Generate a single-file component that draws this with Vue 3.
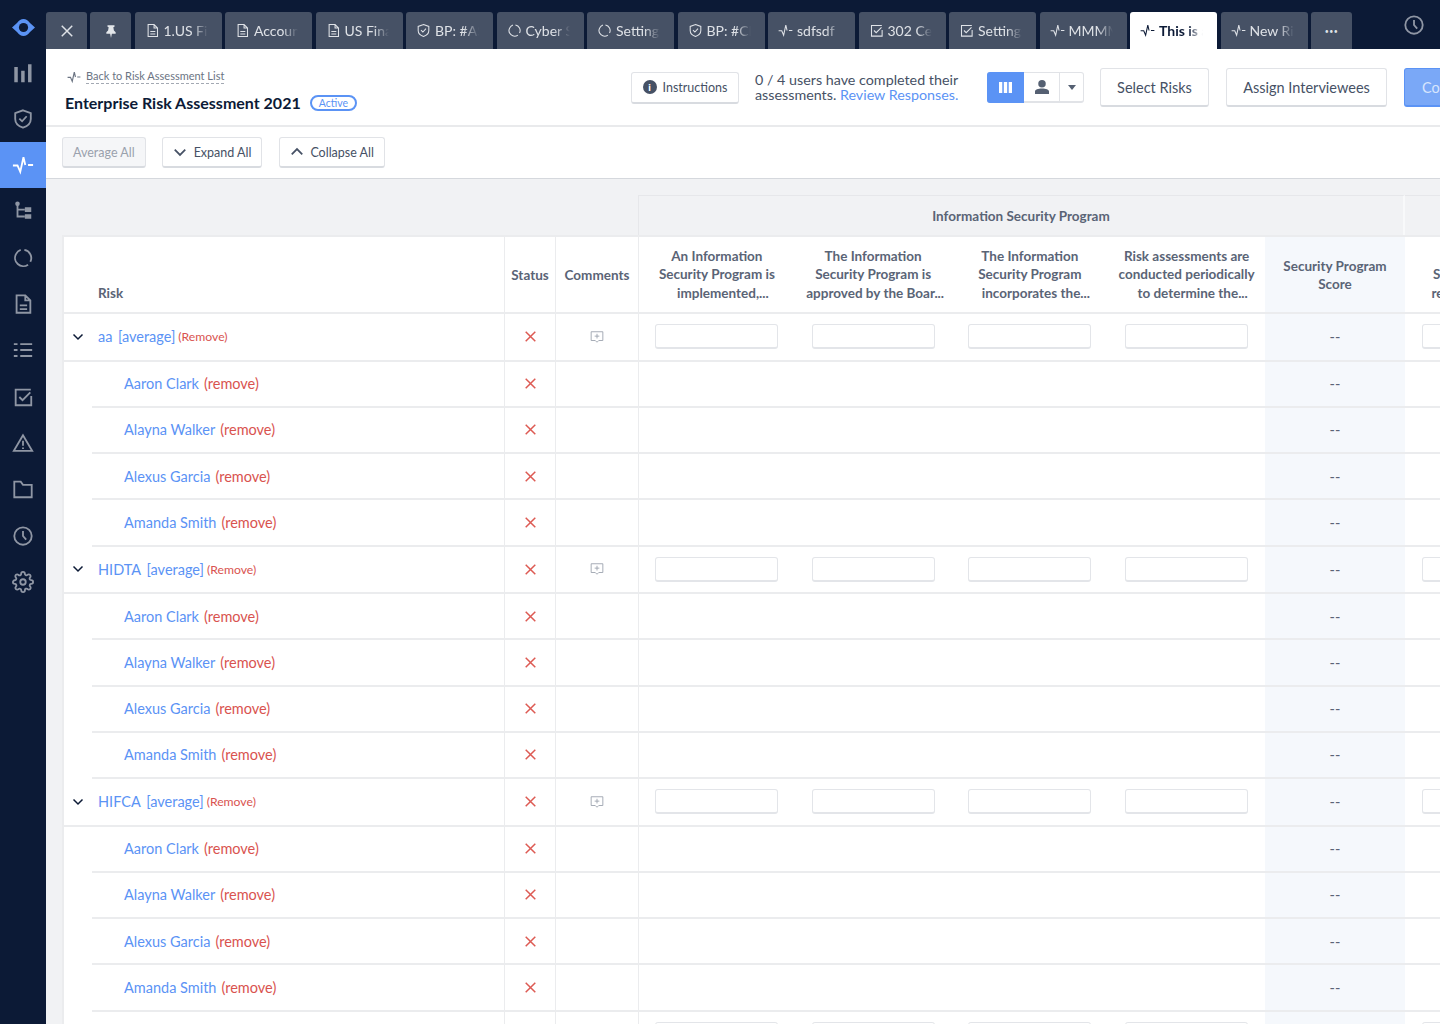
<template>
  <div class="app">
    <aside class="sidebar">
      <div class="logo">
        <svg width="23" height="17" viewBox="0 0 23 17">
          <path fill="#5b93f5" d="M0 8.500L5 4C7 1.500 9 0 11.500 0S16 1.500 18 4L23 8.500 18 13c-2 2.500-4 4-6.500 4S7 15.500 5 13z" />
          <circle cx="11.500" cy="8.500" r="4.600" fill="#0c1a36" />
        </svg>
      </div>
      <div v-for="item in sideItems" :key="item.name" class="side-item" :class="{ active: item.active }">
        <svg width="22" height="22" viewBox="0 0 24 24" class="icon">
          <path :d="icons[item.name]" />
          <path v-if="solid[item.name]" :d="solid[item.name]" class="solid" />
        </svg>
      </div>
    </aside>

    <div class="main">
      <div class="topbar">
        <div class="tab small first">
          <svg width="14" height="14" viewBox="0 0 24 24" class="icon close"><path d="M3 3l18 18M21 3L3 21" /></svg>
        </div>
        <div class="tab small">
          <svg width="14" height="14" viewBox="0 0 24 24"><path fill="#e3e6ea" d="M6 2h12v2.500l-2 1 1 5.500 3 3v2.500h-6.500L12 24l-1.500-7.500H4V14l3-3 1-5.500-2-1z" /></svg>
        </div>
        <div v-for="tab in tabs" :key="tab.label + tab.icon" class="tab" :class="{ current: tab.current }">
          <svg width="15" height="15" viewBox="0 0 24 24" class="icon">
            <path :d="icons[tab.icon]" />
          </svg>
          <span class="tab-label">{{ tab.label }}</span>
        </div>
        <div class="tab small dots">•••</div>
        <div class="history">
          <svg width="22" height="22" viewBox="0 0 24 24" class="icon"><path :d="icons.clock" /></svg>
        </div>
      </div>

      <header class="page-head">
        <div class="head-left">
          <div class="back">
            <svg width="14" height="14" viewBox="0 0 24 24" class="icon"><path :d="icons.pulse" /></svg>
            <span class="back-link">Back to Risk Assessment List</span>
          </div>
          <div class="title-row">
            <h1>Enterprise Risk Assessment 2021</h1>
            <span class="badge">Active</span>
          </div>
        </div>
        <button class="btn instructions">
          <span class="info">i</span>
          Instructions
        </button>
        <div class="progress">
          0 / 4 users have completed their<br />assessments. <a>Review Responses.</a>
        </div>
        <div class="toggle">
          <span class="toggle-on">
            <svg width="13" height="11" viewBox="0 0 13 11"><path fill="#fff" d="M0 0h3.300v11H0zM4.800 0h3.400v11H4.800zM9.700 0H13v11H9.700z" /></svg>
          </span>
          <span class="toggle-user">
            <svg width="14" height="14" viewBox="0 0 14 14"><path fill="#556072" d="M7 0a3.500 3.500 0 0 1 0 7.500A3.500 3.500 0 0 1 7 0zM0 14v-2.500C0 9.500 3 8.500 7 8.500s7 1 7 3V14z" /></svg>
          </span>
          <span class="toggle-caret"></span>
        </div>
        <button class="btn big select">Select Risks</button>
        <button class="btn big assign">Assign Interviewees</button>
        <button class="btn big complete">Complete</button>
      </header>

      <div class="toolbar">
        <button class="btn tool disabled">Average All</button>
        <button class="btn tool">
          <svg width="14" height="14" viewBox="0 0 24 24" class="icon bold"><path d="M3 8l9 9 9-9" /></svg>
          Expand All
        </button>
        <button class="btn tool">
          <svg width="14" height="14" viewBox="0 0 24 24" class="icon bold"><path d="M3 16l9-9 9 9" /></svg>
          Collapse All
        </button>
      </div>

      <div class="content">
        <div class="group-heads">
          <div class="group-head">Information Security Program</div>
          <div class="group-head next"></div>
        </div>
        <div class="table">
          <div class="row head">
            <div class="cell risk">Risk</div>
            <div class="cell status">Status</div>
            <div class="cell comments">Comments</div>
            <div v-for="q in questions" :key="q.last" class="cell q">
              <div>
                {{ q.first }}<br />{{ q.second }}<br />
                <span class="last-line" :style="{ marginLeft: q.shift + 'px' }">{{ q.last }}</span>
              </div>
            </div>
            <div class="cell score">Security Program<br />Score</div>
            <div class="cell q">A Cyber<br />Security Policy is<br />reviewed yearly...</div>
          </div>
          <template v-for="group in groups" :key="group">
            <div class="row group">
              <div class="cell risk">
                <svg width="12" height="12" viewBox="0 0 24 24" class="icon chevron"><path d="M3 7l9 9 9-9" /></svg>
                <a>{{ group }}</a>
                <a class="average">[average]</a>
                <span class="remove-small">(Remove)</span>
              </div>
              <div class="cell status">
                <svg width="11" height="11" viewBox="0 0 11 11" class="cross"><path d="M.7.7l9.600 9.600M10.300.7L.7 10.300" /></svg>
              </div>
              <div class="cell comments">
                <svg width="14" height="14" viewBox="0 0 24 24" class="icon comment"><path d="M2 3h20v15h-7l-3 3-3-3H2zM12 6.500v8M8 10.500h8" /></svg>
              </div>
              <div v-for="n in 4" :key="n" class="cell q"><span class="input"></span></div>
              <div class="cell score">--</div>
              <div class="cell q"><span class="input"></span></div>
            </div>
            <div v-for="person in people" :key="person" class="row">
              <div class="cell risk child">
                <a>{{ person }}</a>
                <span class="remove">(remove)</span>
              </div>
              <div class="cell status">
                <svg width="11" height="11" viewBox="0 0 11 11" class="cross"><path d="M.7.7l9.600 9.600M10.300.7L.7 10.300" /></svg>
              </div>
              <div class="cell comments"></div>
              <div class="cell answers"></div>
              <div class="cell score">--</div>
              <div class="cell q"></div>
            </div>
          </template>
        </div>
      </div>
    </div>
  </div>
</template>

<script setup>
const icons = {
  bars: '',
  shield: 'M12 2.500l8.500 3v6.500c0 5-4 8-8.500 9.500-4.500-1.500-8.500-4.500-8.500-9.500V5.500zM8 11.500l3 3 5-5.500',
  pulse: 'M1 12.500h5l3 7 3.500-16 2 8.500M17.500 12H23',
  tree: 'M6 4v14h8M6 10.500h8',
  ring: 'M13.500 3.100a9 9 0 0 1 6.500 13M17.500 19.300a9 9 0 0 1-13-11.800 9 9 0 0 1 5-4.300',
  doc: 'M5 2.500h9.500L20 8v13.500H5zM14.500 2.500V8H20M8.500 13.500h8M8.500 17.500h8',
  list: 'M9 5.500h13M9 12h13M9 18.500h13M2 5.500h4M2 12h4M2 18.500h4',
  check: 'M20.500 4H4v17h17V11M8 12l3.500 3.500L20 7',
  warn: 'M12 3.500L2 20.500h20zM12 9.500v5.500M12 17v1.500',
  folder: 'M2.500 4h7l2.500 3.500h9.500V21h-19z',
  clock: 'M12 2.500a9.500 9.500 0 1 1 0 19 9.500 9.500 0 0 1 0-19zM12 6.500V12l3.500 4',
  gear: 'M12 9a3 3 0 1 0 0 6 3 3 0 0 0 0-6zM19.400 15a1.650 1.650 0 0 0 .33 1.820l.06.06a2 2 0 0 1 0 2.830 2 2 0 0 1-2.830 0l-.06-.06a1.650 1.650 0 0 0-1.820-.33 1.650 1.650 0 0 0-1 1.510V21a2 2 0 0 1-2 2 2 2 0 0 1-2-2v-.09A1.650 1.650 0 0 0 9 19.400a1.650 1.650 0 0 0-1.820.33l-.06.06a2 2 0 0 1-2.830 0 2 2 0 0 1 0-2.830l.06-.06a1.650 1.650 0 0 0 .33-1.820 1.650 1.650 0 0 0-1.510-1H3a2 2 0 0 1-2-2 2 2 0 0 1 2-2h.09A1.650 1.650 0 0 0 4.600 9a1.650 1.650 0 0 0-.33-1.820l-.06-.06a2 2 0 0 1 0-2.830 2 2 0 0 1 2.830 0l.06.06a1.650 1.650 0 0 0 1.820.33H9a1.650 1.650 0 0 0 1-1.510V3a2 2 0 0 1 2-2 2 2 0 0 1 2 2v.09a1.650 1.650 0 0 0 1 1.510 1.650 1.650 0 0 0 1.820-.33l.06-.06a2 2 0 0 1 2.830 0 2 2 0 0 1 0 2.830l-.06.06a1.650 1.650 0 0 0-.33 1.820V9a1.650 1.650 0 0 0 1.510 1H21a2 2 0 0 1 2 2 2 2 0 0 1-2 2h-.09a1.650 1.650 0 0 0-1.510 1z',
}

const solid = {
  bars: 'M2.500 5.500h3.800V22H2.500zM10 9.500h3.800V22H10zM17.500 2.500h3.800V22h-3.800z',
  tree: 'M6 1.500a2.500 2.500 0 1 1 0 5 2.500 2.500 0 0 1 0-5zM14 8h7v5h-7zM14 15.500h7v5h-7z',
}

const sideItems = [
  { name: 'bars' },
  { name: 'shield' },
  { name: 'pulse', active: true },
  { name: 'tree' },
  { name: 'ring' },
  { name: 'doc' },
  { name: 'list' },
  { name: 'check' },
  { name: 'warn' },
  { name: 'folder' },
  { name: 'clock' },
  { name: 'gear' },
]

const tabs = [
  { icon: 'doc', label: '1.US Financial' },
  { icon: 'doc', label: 'Accounting' },
  { icon: 'doc', label: 'US Finance' },
  { icon: 'shield', label: 'BP: #AS' },
  { icon: 'ring', label: 'Cyber Sec' },
  { icon: 'ring', label: 'Settings' },
  { icon: 'shield', label: 'BP: #CI' },
  { icon: 'pulse', label: 'sdfsdf' },
  { icon: 'check', label: '302 Cert' },
  { icon: 'check', label: 'Settings' },
  { icon: 'pulse', label: 'MMMMM' },
  { icon: 'pulse', label: 'This is a', current: true },
  { icon: 'pulse', label: 'New Risk' },
]

const questions = [
  { first: 'An Information', second: 'Security Program is', last: 'implemented,...', shift: 12 },
  { first: 'The Information', second: 'Security Program is', last: 'approved by the Boar...', shift: 4 },
  { first: 'The Information', second: 'Security Program', last: 'incorporates the...', shift: 12 },
  { first: 'Risk assessments are', second: 'conducted periodically', last: 'to determine the...', shift: 12 },
]

const groups = ['aa', 'HIDTA', 'HIFCA', 'HITRUST']
const people = ['Aaron Clark', 'Alayna Walker', 'Alexus Garcia', 'Amanda Smith']
</script>

<style>
html,
body {
  margin: 0;
  overflow: hidden;
}
</style>

<style scoped>
.app {
  display: flex;
  width: 1440px;
  height: 1024px;
  overflow: hidden;
  font-family: Lato, "Liberation Sans", sans-serif;
  color: #465165;
  background: #f1f2f4;
}

.icon {
  fill: none;
  stroke: currentColor;
  stroke-width: 2;
  flex-shrink: 0;
}
.icon.bold {
  stroke-width: 3;
}
.icon .solid {
  fill: currentColor;
  stroke: none;
}

.sidebar {
  flex: 0 0 46px;
  background: #0c1a36;
  color: #8f96a4;
}
.logo {
  height: 49.400px;
  display: flex;
  justify-content: center;
  padding-top: 19px;
  box-sizing: border-box;
}
.side-item {
  height: 46.300px;
  display: flex;
  align-items: center;
  justify-content: center;
}
.side-item.active {
  background: #5b93f5;
  color: #fff;
}

.main {
  flex: 1;
  min-width: 0;
  display: flex;
  flex-direction: column;
}

.topbar {
  height: 49px;
  flex-shrink: 0;
  background: #0c1a36;
  display: flex;
  align-items: flex-end;
  gap: 3.500px;
}
.tab {
  width: 87px;
  height: 37px;
  box-sizing: border-box;
  padding-left: 10px;
  display: flex;
  align-items: center;
  gap: 4px;
  background: #465165;
  color: #dfe2e7;
  border-radius: 3px 3px 0 0;
  font-size: 14px;
  flex-shrink: 0;
}
.tab .icon {
  stroke-width: 1.700;
}
.tab .icon.close {
  stroke-width: 2.500;
}
.tab.small {
  width: 41px;
  padding: 0;
  justify-content: center;
}
.tab.first {
  margin-right: -0.500px;
}
.tab.dots {
  font-size: 7px;
  letter-spacing: 0.500px;
}
.tab.current {
  background: #fff;
  color: #0c1a36;
  font-weight: 700;
}
.tab-label {
  width: 44px;
  white-space: nowrap;
  overflow: hidden;
  -webkit-mask-image: linear-gradient(to right, #000 65%, transparent 100%);
  mask-image: linear-gradient(to right, #000 65%, transparent 100%);
}
.history {
  margin-left: 47px;
  align-self: flex-start;
  padding-top: 14px;
  color: #8f96a4;
}

.page-head {
  height: 78px;
  flex-shrink: 0;
  box-sizing: border-box;
  background: #fff;
  border-bottom: 2px solid #e9eaec;
  display: flex;
  align-items: center;
  padding-top: 1px;
}
.head-left {
  flex: 0 0 585px;
  box-sizing: border-box;
  padding: 7px 0 0 19px;
}
.back {
  display: flex;
  align-items: center;
  gap: 5px;
  padding-left: 2px;
  color: #6b7483;
  font-size: 11px;
}
.back-link {
  border-bottom: 1px dashed #a3a9b3;
  line-height: 14px;
}
.title-row {
  display: flex;
  align-items: center;
  gap: 9px;
  margin-top: 9px;
}
h1 {
  margin: 0;
  font-size: 16px;
  line-height: 20px;
  font-weight: 700;
  color: #0c1a36;
}
.badge {
  border: 2px solid #5b93f5;
  border-radius: 9px;
  color: #5b93f5;
  font-size: 10.500px;
  line-height: 12px;
  padding: 0 7px;
}

.btn {
  font-family: inherit;
  box-sizing: border-box;
  background: #fff;
  border: 1px solid #e1e3e7;
  border-bottom: 2px solid #d8dbe0;
  border-radius: 3px;
  color: #465165;
  display: inline-flex;
  align-items: center;
  justify-content: center;
  flex-shrink: 0;
  padding: 0;
}
.instructions {
  width: 108px;
  height: 32px;
  gap: 6px;
  font-size: 12.500px;
}
.info {
  width: 14px;
  height: 14px;
  border-radius: 50%;
  background: #465165;
  color: #fff;
  font-size: 10px;
  font-weight: 900;
  line-height: 14px;
  text-align: center;
}
.progress {
  margin: -2px 0 0 16px;
  width: 232px;
  flex-shrink: 0;
  font-size: 14.300px;
  line-height: 15px;
  color: #465165;
}
.progress a {
  color: #5b93f5;
}
.toggle {
  width: 97px;
  height: 31px;
  flex-shrink: 0;
  display: flex;
  box-sizing: border-box;
  border: 1px solid #e1e3e7;
  border-bottom-width: 2px;
  border-radius: 3px;
}
.toggle-on {
  margin: -1px 0 -2px -1px;
  width: 37px;
  background: #5b93f5;
  border-radius: 3px 0 0 3px;
  display: flex;
  align-items: center;
  justify-content: center;
}
.toggle-user {
  width: 35px;
  border-right: 1px solid #e1e3e7;
  display: flex;
  align-items: center;
  justify-content: center;
}
.toggle-caret {
  flex: 1;
  position: relative;
}
.toggle-caret::after {
  content: "";
  position: absolute;
  left: 8px;
  top: 12px;
  border: 4px solid transparent;
  border-top: 5px solid #556072;
  border-bottom: 0;
}
.big {
  height: 39px;
  font-size: 14.500px;
}
.select {
  margin-left: 16px;
  width: 109px;
}
.assign {
  margin-left: 17px;
  width: 161px;
}
.complete {
  margin-left: 17px;
  width: 110px;
  justify-content: flex-start;
  padding-left: 17px;
  background: #7aa8f7;
  border-color: #5b93f5;
  color: #d7e5fd;
}

.toolbar {
  height: 52px;
  flex-shrink: 0;
  box-sizing: border-box;
  background: #fff;
  border-bottom: 1px solid #d5d8dd;
  display: flex;
  align-items: center;
  gap: 16.500px;
  padding: 1px 0 1px 16px;
}
.tool {
  height: 31px;
  padding: 0 10px;
  gap: 6.500px;
  font-size: 12.500px;
}
.tool.disabled {
  background: #f5f6f8;
  color: #9aa1ad;
}

.content {
  flex: 1;
  padding: 16px 0 0 16px;
  min-height: 0;
}
.group-heads {
  display: flex;
  margin-left: 576px;
  height: 40px;
}
.group-head {
  flex: 0 0 767px;
  box-sizing: border-box;
  border: 1px solid #e6e7ea;
  border-bottom: 0;
  border-right: 2px solid #f8f9fa;
  font-size: 13.500px;
  font-weight: 700;
  color: #5a6476;
  display: flex;
  align-items: center;
  justify-content: center;
}
.group-head.next {
  flex: 1;
  border-right: 0;
  border-left: 0;
}

.table {
  width: 1500px;
  background: #fff;
  border-top: 2px solid #ebecee;
  border-left: 2px solid #ebecee;
  box-sizing: border-box;
}
.row {
  display: flex;
  height: 46.250px;
}
.row.group {
  height: 47.500px;
}
.row.head {
  height: 77px;
}
.cell {
  box-sizing: border-box;
  border-bottom: 2px solid #ebecee;
  display: flex;
  align-items: center;
  flex-shrink: 0;
  font-size: 14.500px;
}
.risk {
  width: 440px;
}
.row.head .risk {
  padding: 0 0 11px 34px;
  align-items: flex-end;
  font-size: 13.500px;
  font-weight: 700;
  color: #5a6476;
}
.row.group .risk {
  padding-left: 8px;
}
.risk.child {
  margin-left: 28px;
  width: 412px;
  padding-left: 32px;
  gap: 5px;
}
.risk a {
  color: #5b93f5;
}
.chevron {
  color: #0c1a36;
  stroke-width: 3;
  margin-right: 14px;
}
.average {
  margin-left: 5.500px;
}
.remove {
  color: #d9534f;
}
.remove-small {
  color: #d9534f;
  font-size: 12.200px;
  margin-left: 3px;
}
.status {
  width: 51px;
  border-left: 1px solid #ebecee;
  justify-content: center;
}
.comments {
  width: 83px;
  border-left: 1px solid #ebecee;
  justify-content: center;
}
.row.head .status,
.row.head .comments {
  font-size: 13.500px;
  font-weight: 700;
  color: #5a6476;
}
.comment {
  color: #9aa1ad;
  stroke-width: 1.500;
}
.cross {
  fill: none;
  stroke: #dd5a53;
  stroke-width: 1.500;
}
.q {
  width: 156.750px;
  justify-content: center;
  text-align: center;
  border-left: 0;
  white-space: nowrap;
}
.row.head .q {
  font-size: 13.500px;
  font-weight: 700;
  line-height: 18.500px;
  color: #5a6476;
}
.last-line {
  display: inline-block;
}
.row.group .q:nth-child(4),
.row.head .q:nth-child(4),
.answers {
  border-left: 1px solid #ebecee;
}
.answers {
  width: 627px;
}
.input {
  width: 123px;
  height: 25px;
  box-sizing: border-box;
  border: 1px solid #e3e5e9;
  border-bottom-width: 2px;
  border-radius: 3px;
  background: #fff;
}
.score {
  width: 140px;
  justify-content: center;
  text-align: center;
  background: #f5f8fc;
  color: #5a6476;
}
.row.head .score {
  font-size: 13.500px;
  font-weight: 700;
  line-height: 18.500px;
  padding-top: 1px;
}
</style>
